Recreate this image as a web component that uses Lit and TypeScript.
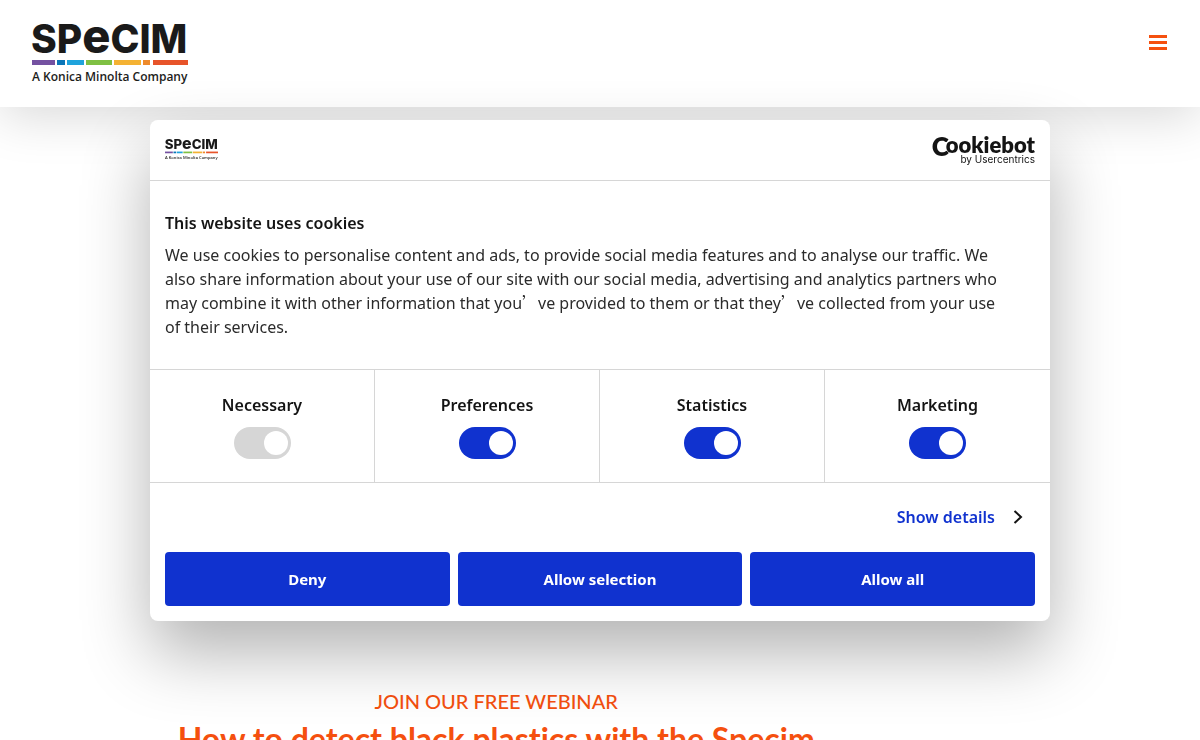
import { LitElement, html, css, svg } from "lit";
import { customElement, property } from "lit/decorators.js";

@customElement("specim-logo")
class SpecimLogo extends LitElement {
  static styles = css`
    :host { display: block; }
    .mark { display: block; width: 100%; height: auto; overflow: visible; }
    .word { font: 800 39px Inter, sans-serif; fill: #1a1a1a; }
    .round { font-size: 47px; }
    .tagline { font: 600 12px "Open Sans", sans-serif; fill: #1d1d1b; }
  `;
  render() {
    const bars = [
      [0, 23, "#7451a1"], [25, 8, "#0b76b8"], [35, 17, "#1fa3dc"], [54, 26, "#7fc043"],
      [82, 27, "#f4b233"], [111, 7, "#ee8a2b"], [121, 35, "#e7542a"],
    ] as const;
    return html`<svg class="mark" viewBox="0 0 156 60" role="img" aria-label="Specim, a Konica Minolta company">
      <text class="word" x="-1" y="30">SP<tspan class="round">e</tspan>CIM</text>
      ${bars.map(([x, w, c]) => svg`<rect x=${x} y="37" width=${w} height="5" fill=${c}></rect>`)}
      <text class="tagline" x="0" y="58">A Konica Minolta Company</text>
    </svg>`;
  }
}

@customElement("consent-switch")
class ConsentSwitch extends LitElement {
  @property() label = "";
  @property({ type: Boolean }) locked = false;
  static styles = css`
    :host { display: block; }
    .cell { display: flex; flex-direction: column; align-items: center; gap: 10px; padding: 23px 8px; }
    .name { font-weight: 600; font-size: 16px; line-height: 24px; color: #141414; }
    .switch {
      appearance: none; box-sizing: border-box; display: flex; align-items: center; justify-content: flex-start;
      width: 57px; height: 32px; margin: 0; padding: 0 3px; border-radius: 16px; background: #d6d6d6; cursor: pointer;
    }
    .switch::before { content: ""; width: 24px; height: 24px; border-radius: 50%; background: #fff; }
    .switch:checked { justify-content: flex-end; background: #1032cf; }
    .switch:disabled { background: #d6d6d6; cursor: default; }
  `;
  render() {
    return html`<label class="cell">
      <span class="name">${this.label}</span>
      <input class="switch" type="checkbox" checked ?disabled=${this.locked}>
    </label>`;
  }
}

@customElement("cookie-dialog")
class CookieDialog extends LitElement {
  static styles = css`
    :host {
      display: block; box-sizing: border-box; width: 100%; max-width: 900px; background: #fff; border-radius: 8px;
      box-shadow: 0 32px 68px rgba(0, 0, 0, 0.3); color: #141414;
      font: 16px/24px "Noto Sans", "Open Sans", sans-serif;
    }
    .top { display: flex; align-items: center; justify-content: space-between; height: 60px; padding: 0 15px; border-bottom: 1px solid #d6d6d6; }
    .brand { width: 53px; }
    .vendor { display: block; width: 104px; height: 34px; overflow: visible; }
    .vendor-name { font: 800 22px Lato, sans-serif; fill: #141414; }
    .vendor-initial { font-size: 26px; }
    .vendor-by { font: 400 10px Inter, sans-serif; fill: #141414; }
    .body { padding: 30px 40px 30px 15px; }
    .title { margin: 0 0 8px; font-size: 16px; line-height: 24px; font-weight: 600; }
    .text { margin: 0; color: #2b2b2b; }
    .quote { font-family: "Noto Sans CJK SC", sans-serif; line-height: 0; }
    .choices { display: grid; grid-template-columns: repeat(4, 1fr); border: solid #d6d6d6; border-width: 1px 0; }
    .choice { border-right: 1px solid #d6d6d6; }
    .choice:last-child { border-right: 0; }
    .more { display: flex; justify-content: flex-end; padding: 22px 27px 23px 15px; }
    .details { display: flex; align-items: center; gap: 18px; color: #1032cf; font-weight: 600; text-decoration: none; }
    .chevron { width: 10px; height: 16px; }
    .actions { display: grid; grid-template-columns: repeat(3, 1fr); gap: 8px; padding: 0 15px 15px; }
    .action { height: 54px; border: 0; border-radius: 4px; background: #1032cf; color: #fff; font: 700 15px/24px "Noto Sans", sans-serif; cursor: pointer; }
  `;
  render() {
    const quote = html`<span class="quote">’</span>`;
    return html`
      <div class="top">
        <specim-logo class="brand"></specim-logo>
        <svg class="vendor" viewBox="0 0 104 34" role="img" aria-label="Cookiebot by Usercentrics">
          <text class="vendor-name" x="104" y="23" text-anchor="end"><tspan class="vendor-initial">C</tspan><tspan dx="-3" dy="-3">ookiebot</tspan></text>
          <text class="vendor-by" x="104" y="30" text-anchor="end">by Usercentrics</text>
        </svg>
      </div>
      <div class="body">
        <h2 class="title">This website uses cookies</h2>
        <p class="text">We use cookies to personalise content and ads, to provide social media features and to analyse our traffic. We also share information about your use of our site with our social media, advertising and analytics partners who may combine it with other information that you${quote}ve provided to them or that they${quote}ve collected from your use of their services.</p>
      </div>
      <div class="choices">
        <consent-switch class="choice" label="Necessary" locked></consent-switch>
        <consent-switch class="choice" label="Preferences"></consent-switch>
        <consent-switch class="choice" label="Statistics"></consent-switch>
        <consent-switch class="choice" label="Marketing"></consent-switch>
      </div>
      <div class="more">
        <a class="details" href="#details">Show details
          <svg class="chevron" viewBox="0 0 10 16" fill="none" stroke="#141414" stroke-width="2"><path d="M1.5 2 8 8 1.5 14"></path></svg>
        </a>
      </div>
      <div class="actions">
        <button class="action" type="button">Deny</button>
        <button class="action" type="button">Allow selection</button>
        <button class="action" type="button">Allow all</button>
      </div>`;
  }
}

@customElement("app-root")
class AppRoot extends LitElement {
  static styles = css`
    :host { display: block; height: 100vh; overflow: hidden; background: #fff; font-family: Lato, sans-serif; }
    .header {
      position: relative; display: flex; align-items: flex-start; justify-content: space-between;
      padding: 23px 32px 24px; background: #fff; box-shadow: 0 10px 50px rgba(0, 0, 0, 0.15);
    }
    .logo { width: 156px; }
    .menu { display: grid; place-items: center; margin: 9px 0 0; padding: 0; border: 0; background: none; cursor: pointer; }
    .bars { display: block; width: 19px; height: 20px; }
    .hero { padding: 579px 17.3% 0 0; color: #f5500f; text-align: center; font-variant-ligatures: none; }
    .kicker { margin: 0; font-size: 20px; line-height: 30px; font-weight: 500; }
    .headline { margin: 0; font-size: 32px; line-height: 46px; font-weight: 700; }
    .overlay { position: fixed; inset: 0; display: grid; place-items: center; }
  `;
  render() {
    return html`
      <header class="header">
        <specim-logo class="logo"></specim-logo>
        <button class="menu" type="button" aria-label="Menu">
          <svg class="bars" viewBox="0 0 19 20" fill="#f5500f"><rect x="0" y="3" width="18" height="3"></rect><rect x="0" y="9" width="18" height="3"></rect><rect x="0" y="15" width="18" height="3"></rect></svg>
        </button>
      </header>
      <main class="hero">
        <p class="kicker">JOIN OUR FREE WEBINAR</p>
        <h1 class="headline">How to detect black plastics with the Specim</h1>
      </main>
      <div class="overlay"><cookie-dialog role="dialog" aria-label="Cookie consent"></cookie-dialog></div>`;
  }
}
